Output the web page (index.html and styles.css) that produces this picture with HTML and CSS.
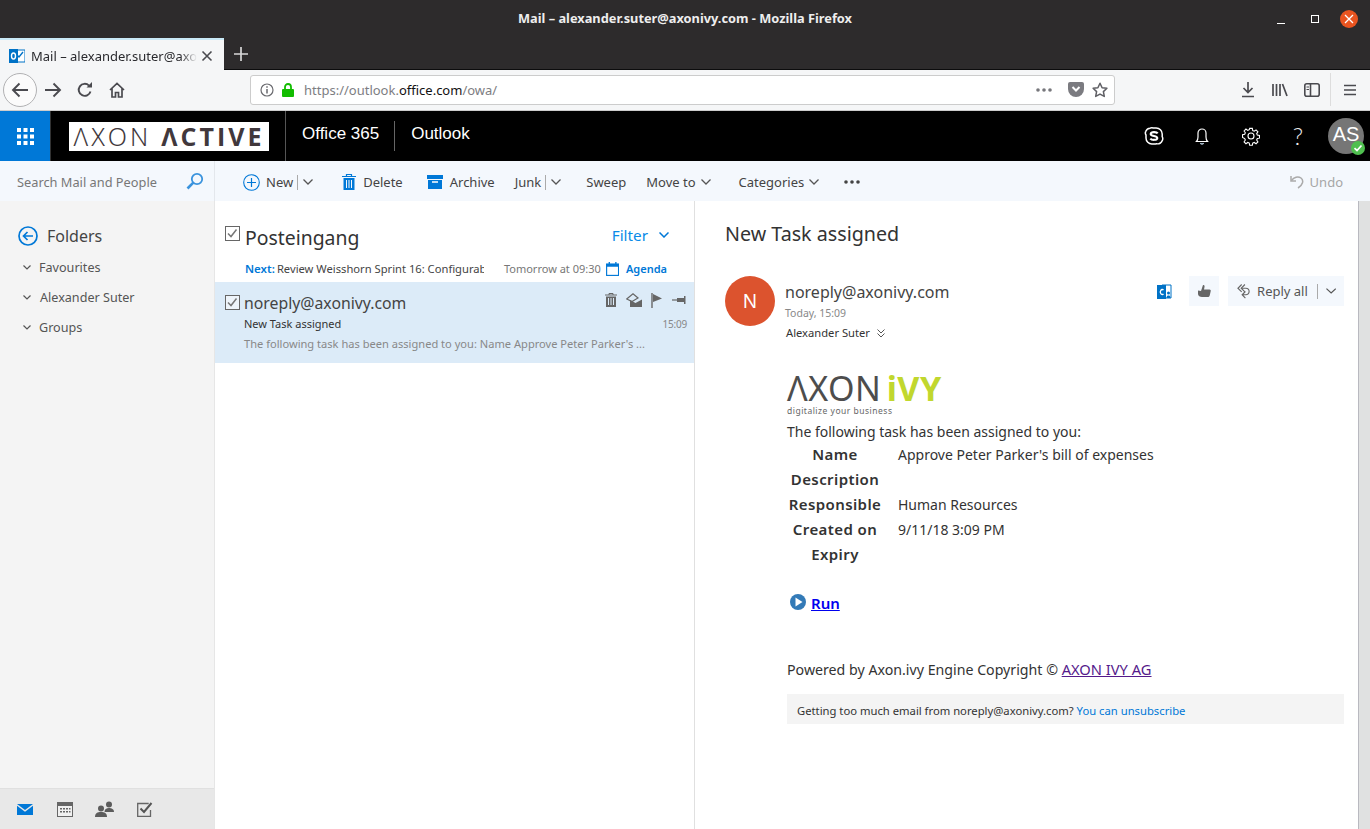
FILE: index.html
```html
<!DOCTYPE html>
<html lang="en">
<head>
    <meta charset="UTF-8">
    <title>Mail – alexander.suter@axonivy.com - Mozilla Firefox</title>
    <link rel="stylesheet" href="styles.css">
</head>
<body>
    <div class="titlebar">
        <span class="win-title">Mail – alexander.suter@axonivy.com - Mozilla Firefox</span>
        <div class="win-controls">
            <svg width="10" height="10" viewBox="0 0 10 10"><path d="M1 9.500h8" stroke="#fff" stroke-width="1"/></svg>
            <svg width="10" height="10" viewBox="0 0 10 10"><rect x="1.500" y="1.500" width="7" height="7" fill="none" stroke="#fff" stroke-width="1"/></svg>
            <span class="win-close"><svg width="10" height="10" viewBox="0 0 10 10"><path d="M1 1l8 8M9 1l-8 8" stroke="#fff" stroke-width="1.300"/></svg></span>
        </div>
    </div>

    <div class="tabbar">
        <div class="tab">
            <svg class="favicon" width="16" height="16" viewBox="0 0 16 16"><rect x="6" y="2" width="10" height="12" fill="#fff" stroke="#0072c6"/><path d="M8 7l2 2 4-5" fill="none" stroke="#0072c6" stroke-width="1.400"/><rect x="0" y="1" width="9" height="14" fill="#0072c6"/><ellipse cx="4.500" cy="8" rx="2" ry="3" fill="none" stroke="#fff" stroke-width="1.400"/></svg>
            <span class="tab-label">Mail – alexander.suter@axo</span>
            <svg width="12" height="12" viewBox="0 0 12 12"><path d="M1.500 1.500l9 9M10.500 1.500l-9 9" stroke="#4a4a4f" stroke-width="1.600"/></svg>
        </div>
        <svg class="newtab" width="14" height="14" viewBox="0 0 14 14"><path d="M7 0v14M0 7h14" stroke="#d7d7d8" stroke-width="1.700"/></svg>
    </div>

    <div class="navbar">
        <span class="back-btn"><svg width="18" height="16" viewBox="0 0 18 16"><path d="M17 8H2M8.500 1.500L2 8l6.500 6.500" fill="none" stroke="#4a4a4f" stroke-width="1.900"/></svg></span>
        <svg class="nav-ico fwd" width="18" height="16" viewBox="0 0 18 16"><path d="M1 8h15M9.500 1.500L16 8l-6.500 6.500" fill="none" stroke="#4a4a4f" stroke-width="1.900"/></svg>
        <svg class="nav-ico reload" width="16" height="16" viewBox="0 0 16 16"><path d="M13.500 9.500A6 6 0 1 1 12 3.600" fill="none" stroke="#4a4a4f" stroke-width="1.900"/><path d="M9.500 5.500h5.500V0z" fill="#4a4a4f"/></svg>
        <svg class="nav-ico home" width="16" height="16" viewBox="0 0 16 16"><path d="M1 8l7-6.500L15 8M3 6.500V15h3.500v-4.500h3V15H13V6.500" fill="none" stroke="#4a4a4f" stroke-width="1.700"/></svg>
        <div class="urlbar">
            <svg width="14" height="14" viewBox="0 0 14 14"><circle cx="7" cy="7" r="6" fill="none" stroke="#6a6a6f" stroke-width="1.200"/><path d="M7 6v4.500M7 3.200v1.600" stroke="#6a6a6f" stroke-width="1.500"/></svg>
            <svg class="lock" width="12" height="14" viewBox="0 0 12 14"><path d="M3 6V4a3 3 0 0 1 6 0v2" fill="none" stroke="#12bc00" stroke-width="1.800"/><rect x="0" y="6" width="12" height="8" rx="1" fill="#12bc00"/></svg>
            <span class="url"><span class="url-dim">https://outlook.</span>office.com<span class="url-dim">/owa/</span></span>
            <svg class="url-dots" width="16" height="4" viewBox="0 0 16 4" fill="#77777c"><circle cx="2" cy="2" r="1.800"/><circle cx="8" cy="2" r="1.800"/><circle cx="14" cy="2" r="1.800"/></svg>
            <svg width="16" height="15" viewBox="0 0 16 15"><path d="M2 0h12a2 2 0 0 1 2 2v5A8 8 0 0 1 0 7V2a2 2 0 0 1 2-2z" fill="#7b7b80"/><path d="M4.500 5L8 8.500 11.500 5" fill="none" stroke="#fff" stroke-width="2"/></svg>
            <svg width="16" height="16" viewBox="0 0 16 16"><path d="M8 1.300l2.100 4.400 4.800.6-3.500 3.300.9 4.800L8 12.100l-4.300 2.300.9-4.800L1.100 6.300l4.800-.6z" fill="none" stroke="#5f5f64" stroke-width="1.500" stroke-linejoin="round"/></svg>
        </div>
        <svg class="nav-ico tool-dl" width="16" height="16" viewBox="0 0 16 16"><path d="M8 0v10M3.500 6L8 10.500 12.500 6M2 14.500h12" fill="none" stroke="#4a4a4f" stroke-width="1.700"/></svg>
        <svg class="nav-ico tool" width="16" height="14" viewBox="0 0 16 14"><path d="M1 1v12M4.500 1v12M8 1v12M10.500 1l4.500 12" fill="none" stroke="#4a4a4f" stroke-width="1.700"/></svg>
        <svg class="nav-ico tool" width="16" height="14" viewBox="0 0 16 14"><rect x=".8" y=".8" width="14.400" height="12.400" rx="2" fill="none" stroke="#4a4a4f" stroke-width="1.600"/><path d="M6.500 1v12" stroke="#4a4a4f" stroke-width="1.600"/><path d="M2.500 4h2.500M2.500 6.500h2.500" stroke="#4a4a4f"/></svg>
        <span class="nav-sep"></span>
        <svg class="nav-ico" width="12" height="12" viewBox="0 0 12 12"><path d="M0 1.500h12M0 6h12M0 10.500h12" stroke="#4a4a4f" stroke-width="1.600"/></svg>
    </div>

    <div class="o365">
        <div class="waffle">
            <svg width="17" height="17" viewBox="0 0 17 17" fill="#fff"><rect width="4" height="4"/><rect x="6.500" width="4" height="4"/><rect x="13" width="4" height="4"/><rect y="6.500" width="4" height="4"/><rect x="6.500" y="6.500" width="4" height="4"/><rect x="13" y="6.500" width="4" height="4"/><rect y="13" width="4" height="4"/><rect x="6.500" y="13" width="4" height="4"/><rect x="13" y="13" width="4" height="4"/></svg>
        </div>
        <div class="brand-wrap">
            <div class="brand"><span class="brand-light">ΛXON</span> <span class="brand-bold">ΛCTIVE</span></div>
        </div>
        <span class="app-name">Office 365</span>
        <span class="app-sep"></span>
        <span class="app-name">Outlook</span>
        <div class="o365-tools">
            <svg width="20" height="20" viewBox="0 0 20 20"><path d="M6 2.200c1-.6 2.200-.5 3.200-.3h3c3.300 0 6 2.700 6 6v2.800c.6 1 .7 2.700.1 3.900-.8 2.300-3.200 3.700-5.600 3.100-.9.200-2.100.2-3 .2H8C4.700 18 2 15.300 2 12V9c-.7-1-.8-2.600-.2-3.700C2.400 3.800 4.200 2.400 6 2.200z" fill="none" stroke="#fff" stroke-width="1.500"/><path d="M13.700 7.300c-.9-1.300-6.500-2-7 .6-.5 2.800 6.800 1.500 6.600 4.300-.2 2.200-5.700 2-7 .4" fill="none" stroke="#fff" stroke-width="2.100"/></svg>
            <svg width="20" height="20" viewBox="0 0 20 20"><path d="M4.500 15.500c1-1 1.500-2 1.500-4.500V7a4 4 0 0 1 8 0v4c0 2.500.5 3.500 1.500 4.500z" fill="none" stroke="#fff" stroke-width="1.200"/><path d="M8.500 17a1.600 1.600 0 0 0 3 0" fill="none" stroke="#cfe6fa" stroke-width="1.200"/></svg>
            <svg class="gear" width="20" height="20" viewBox="0 0 20 20"><circle cx="10" cy="10" r="3" fill="none" stroke="#fff" stroke-width="1.100"/><path d="M8.500 1.500h3l.4 2.400 1.700.7 2-1.400 2.100 2.100-1.400 2 .7 1.700 2.400.4v3l-2.400.4-.7 1.700 1.400 2-2.100 2.100-2-1.400-1.700.7-.4 2.400h-3l-.4-2.400-1.700-.7-2 1.400-2.100-2.100 1.400-2-.7-1.700L.6 11.500v-3L3 8.100l.7-1.700-1.400-2 2.100-2.100 2 1.400 1.700-.7z" transform="translate(1 1) scale(.9)" fill="none" stroke="#fff" stroke-width="1.200"/></svg>
            <span class="help">?</span>
            <span class="avatar-me">AS
                <span class="presence"><svg width="10" height="10" viewBox="0 0 10 10"><path d="M1.500 5.200l2.500 2.300 4.500-5" fill="none" stroke="#fff" stroke-width="1.700"/></svg></span>
            </span>
        </div>
    </div>

    <div class="cmdbar">
        <div class="search">
            <span>Search Mail and People</span>
            <svg width="18" height="18" viewBox="0 0 18 18"><circle cx="11" cy="7" r="5.200" fill="none" stroke="#3a93dd" stroke-width="1.800"/><path d="M7.300 10.700L1.500 16.500" stroke="#3a93dd" stroke-width="2.600"/></svg>
        </div>
        <div class="commands">
            <span class="cmd cmd-new"><svg width="17" height="17" viewBox="0 0 17 17"><circle cx="8.500" cy="8.500" r="7.800" fill="none" stroke="#0078d7" stroke-width="1.100"/><path d="M8.500 4v9M4 8.500h9" stroke="#0078d7" stroke-width="1.200"/></svg>New<i class="bar"></i><svg class="chev" width="10" height="6" viewBox="0 0 10 6"><path d="M.5.500L5 5 9.500.500" fill="none" stroke="#555" stroke-width="1.300"/></svg></span>
            <span class="cmd cmd-delete"><svg width="14" height="16" viewBox="0 0 14 16"><path d="M0 2.500h14M4.500 2.500V.5h5v2" fill="none" stroke="#0078d7" stroke-width="1.200"/><path d="M1.500 4h11v12h-11z" fill="#0078d7"/><path d="M4.500 6v8M7 6v8M9.500 6v8" stroke="#f4f8fd" stroke-width="1"/></svg>Delete</span>
            <span class="cmd cmd-archive"><svg width="16" height="14" viewBox="0 0 16 14"><rect width="16" height="4" fill="#0078d7"/><path d="M1 5h14v9H1z" fill="#0078d7"/><path d="M5 7h6" stroke="#fff" stroke-width="1.500"/></svg>Archive</span>
            <span class="cmd cmd-junk">Junk<i class="bar"></i><svg class="chev" width="10" height="6" viewBox="0 0 10 6"><path d="M.5.500L5 5 9.500.500" fill="none" stroke="#555" stroke-width="1.300"/></svg></span>
            <span class="cmd cmd-sweep">Sweep</span>
            <span class="cmd cmd-move">Move to<svg class="chev" width="10" height="6" viewBox="0 0 10 6"><path d="M.5.500L5 5 9.500.500" fill="none" stroke="#555" stroke-width="1.300"/></svg></span>
            <span class="cmd cmd-cat">Categories<svg class="chev" width="10" height="6" viewBox="0 0 10 6"><path d="M.5.500L5 5 9.500.500" fill="none" stroke="#555" stroke-width="1.300"/></svg></span>
            <svg class="cmd-more" width="16" height="4" viewBox="0 0 16 4" fill="#444"><circle cx="2" cy="2" r="1.800"/><circle cx="8" cy="2" r="1.800"/><circle cx="14" cy="2" r="1.800"/></svg>
            <span class="cmd cmd-undo"><svg width="14" height="14" viewBox="0 0 14 14"><path d="M1 1v5h5" fill="none" stroke="#aaa" stroke-width="1.500"/><path d="M1.500 5.500C4 2 8 1 11 3c3 2.500 2 7-3 10" fill="none" stroke="#aaa" stroke-width="1.500"/></svg>Undo</span>
        </div>
    </div>

    <div class="main">
        <nav class="leftnav">
            <div class="folders-head">
                <svg width="20" height="20" viewBox="0 0 20 20"><circle cx="10" cy="10" r="9" fill="none" stroke="#0078d7" stroke-width="1.700"/><path d="M15 10H6M9.500 6L5.500 10l4 4" fill="none" stroke="#0078d7" stroke-width="1.700"/></svg>
                <span>Folders</span>
            </div>
            <ul class="folder-list">
                <li><svg width="8" height="5" viewBox="0 0 8 5"><path d="M.5.500L4 4 7.500.500" fill="none" stroke="#555" stroke-width="1.200"/></svg>Favourites</li>
                <li class="me"><svg width="8" height="5" viewBox="0 0 8 5"><path d="M.5.500L4 4 7.500.500" fill="none" stroke="#555" stroke-width="1.200"/></svg>Alexander Suter</li>
                <li><svg width="8" height="5" viewBox="0 0 8 5"><path d="M.5.500L4 4 7.500.500" fill="none" stroke="#555" stroke-width="1.200"/></svg>Groups</li>
            </ul>
            <div class="modules">
                <svg width="16" height="11" viewBox="0 0 16 11"><path d="M0 0h16L8 6z" fill="#0078d7"/><path d="M0 1.800V11h16V1.800L8 7.800z" fill="#0078d7"/></svg>
                <svg width="16" height="15" viewBox="0 0 16 15"><rect width="16" height="15" fill="#666"/><rect x="1" y="4" width="14" height="10" fill="#f0f0f0"/><path d="M3 6h2v1.500H3zM6 6h2v1.500H6zM9 6h2v1.500H9zM12 6h1.500v1.500H12zM3 9h2v1.500H3zM6 9h2v1.500H6zM9 9h2v1.500H9zM12 9h1.500v1.500H12z" fill="#666"/></svg>
                <svg width="20" height="16" viewBox="0 0 20 16" fill="#5c5c5c"><circle cx="14" cy="3.500" r="3"/><path d="M9.500 11c0-3 2-4 4.500-4s5 1 5 4z"/><circle cx="6" cy="7.500" r="3"/><path d="M0 16c0-4 2.500-5 6-5s6 1 6 5z"/></svg>
                <svg width="16" height="15" viewBox="0 0 16 15"><path d="M13.500 8v6.300H.7V1.500h11" fill="none" stroke="#666" stroke-width="1.300"/><path d="M3.500 6.500l3.500 3.500 7.500-9" fill="none" stroke="#555" stroke-width="2"/></svg>
            </div>
        </nav>

        <section class="msglist">
            <div class="list-head">
                <svg class="check" width="15" height="15" viewBox="0 0 15 15"><rect x=".5" y=".5" width="14" height="14" fill="none" stroke="#666"/><path d="M3 7.500l3 3 5.500-7" fill="none" stroke="#777" stroke-width="1.500"/></svg>
                <h2>Posteingang</h2>
                <span class="filter">Filter<svg width="10" height="6" viewBox="0 0 10 6"><path d="M.5.500L5 5 9.500.500" fill="none" stroke="#0078d7" stroke-width="1.500"/></svg></span>
            </div>
            <div class="next-row">
                <b class="next-label">Next:</b>
                <span class="next-title">Review Weisshorn Sprint 16: Configurab</span>
                <span class="next-time">Tomorrow at 09:30</span>
                <svg width="15" height="16" viewBox="0 0 15 16"><rect x=".7" y="2.500" width="13.600" height="12.800" fill="none" stroke="#0078d7" stroke-width="1.300"/><path d="M0 2h15v3.500H0zM3 0h1.500v3H3zM10.500 0H12v3h-1.500z" fill="#0078d7"/></svg>
                <b class="agenda">Agenda</b>
            </div>
            <div class="msg-row">
                <div class="msg-top">
                    <svg class="check" width="15" height="15" viewBox="0 0 15 15"><rect x=".5" y=".5" width="14" height="14" fill="#eef4fa" stroke="#666"/><path d="M3 7.500l3 3 5.500-7" fill="none" stroke="#777" stroke-width="1.500"/></svg>
                    <span class="msg-from">noreply@axonivy.com</span>
                    <div class="msg-actions">
                        <svg width="12" height="14" viewBox="0 0 12 14"><path d="M0 2h12M4 2V.5h4V2" fill="none" stroke="#666"/><path d="M1 3.500h10V14H1z" fill="#666"/><path d="M3.500 5v7M6 5v7M8.500 5v7" stroke="#dcebf8"/></svg>
                        <svg width="16" height="14" viewBox="0 0 16 14"><path d="M.7 6L7 .8 12 5 6 8.500z" fill="none" stroke="#666" stroke-width="1.200"/><path d="M4 7l5.500 3L16 6.500V14H4z" fill="#666"/></svg>
                        <svg width="12" height="15" viewBox="0 0 12 15"><path d="M1 0v15" stroke="#666" stroke-width="1.400"/><path d="M2 1l9 4.500L2 9z" fill="#666"/></svg>
                        <svg width="15" height="10" viewBox="0 0 15 10"><path d="M0 5h6" stroke="#666" stroke-width="1.200"/><path d="M5 3h7V1h1.500v8H12V7H5z" fill="#666"/></svg>
                    </div>
                </div>
                <div class="msg-subject-row"><span>New Task assigned</span><span class="msg-time">15:09</span></div>
                <div class="msg-preview">The following task has been assigned to you: Name Approve Peter Parker's ...</div>
            </div>
        </section>

        <section class="reading">
            <h1 class="subject">New Task assigned</h1>
            <div class="sender">
                <span class="avatar">N</span>
                <div class="sender-info">
                    <div class="sender-name">noreply@axonivy.com</div>
                    <div class="sender-date">Today, 15:09</div>
                    <div class="sender-to">Alexander Suter<svg width="8" height="9" viewBox="0 0 8 9"><path d="M.5.500L4 4 7.500.500M.5 4.500L4 8l3.500-3.500" fill="none" stroke="#555"/></svg></div>
                </div>
                <div class="sender-actions">
                    <svg class="sfb" width="15" height="15" viewBox="0 0 15 15"><path d="M5 1h9v13H5z" fill="none" stroke="#0072c6"/><rect y="1" width="9" height="14" fill="#0072c6"/><path d="M6.500 6a2 2.500 0 1 0 0 4" fill="none" stroke="#fff" stroke-width="1.300"/><circle cx="11.500" cy="9" r="1.500" fill="#0072c6"/><path d="M9.500 14c0-2 1-2.500 2-2.500s2 .5 2 2.500z" fill="#0072c6"/></svg>
                    <span class="act-btn"><svg width="14" height="14" viewBox="0 0 14 14"><path d="M1 6.500l3 .5L6 1c1.200-.3 1.800.6 1.500 2L7 5.500h5.500c1 0 1.500.8 1.200 1.800l-1 4.200c-.3 1-1 1.500-2 1.500H5c-2 0-4-1-4-3z" fill="#666"/></svg></span>
                    <span class="act-btn reply"><svg width="14" height="17" viewBox="0 0 14 17"><path d="M5 1L1 5l4 4M8.500 1l-4 4 4 4" fill="none" stroke="#666" stroke-width="1.200"/><path d="M5 5h4.500a3.500 3.500 0 0 1 0 7H6M9 8.500L5.500 12 9 15.500" fill="none" stroke="#666" stroke-width="1.200"/></svg><span class="reply-label">Reply all</span><i class="bar"></i><svg width="11" height="6" viewBox="0 0 11 6"><path d="M.5.500L5.500 5l5-4.500" fill="none" stroke="#555" stroke-width="1.300"/></svg></span>
                </div>
            </div>
            <div class="mail-body">
                <div class="ivy-logo"><span class="ivy-axon">ΛXON</span> <span class="ivy-ivy">iVY</span></div>
                <div class="ivy-tag">digitalize your business</div>
                <p class="intro">The following task has been assigned to you:</p>
                <table class="task-table">
                    <tr><th>Name</th><td>Approve Peter Parker's bill of expenses</td></tr>
                    <tr><th>Description</th><td></td></tr>
                    <tr><th>Responsible</th><td>Human Resources</td></tr>
                    <tr><th>Created on</th><td>9/11/18 3:09 PM</td></tr>
                    <tr><th>Expiry</th><td></td></tr>
                </table>
                <div class="run">
                    <svg width="16" height="16" viewBox="0 0 16 16"><circle cx="8" cy="8" r="8" fill="#337ab7"/><path d="M5.500 3.500l7 4.500-7 4.500z" fill="#fff"/></svg>
                    <a href="#">Run</a>
                </div>
                <p class="powered">Powered by Axon.ivy Engine Copyright © <a href="#">AXON IVY AG</a></p>
                <div class="unsub">Getting too much email from noreply@axonivy.com? <span>You can unsubscribe</span></div>
            </div>
        </section>
        <div class="scrollbar"></div>
    </div>
</body>
</html>
```

FILE: styles.css
```css
* {
    box-sizing: border-box;
}
html, body {
    margin: 0;
    height: 829px;
    overflow: hidden;
}
body {
    display: flex;
    flex-direction: column;
    font-family: "Noto Sans", sans-serif;
    font-size: 14px;
    color: #333;
    background: #2d2b2c;
}

/* browser chrome */
.titlebar {
    height: 38px;
    flex: none;
    display: flex;
    align-items: center;
    justify-content: center;
    position: relative;
    padding-bottom: 2px;
    background: #2d2b2c;
    color: #eee;
}
.win-title {
    font-size: 12.800px;
    font-weight: 700;
}
.win-controls {
    position: absolute;
    top: 10px;
    right: 12px;
    display: flex;
    align-items: center;
    gap: 24px;
}
.win-close {
    width: 18px;
    height: 18px;
    margin-left: -4px;
    border-radius: 50%;
    background: #e95420;
    display: flex;
    align-items: center;
    justify-content: center;
}
.tabbar {
    height: 32px;
    flex: none;
    display: flex;
    align-items: center;
    background: #2d2b2c;
    border-bottom: 1px solid #0c0c0d;
}
.tab {
    width: 224px;
    height: 32px;
    display: flex;
    align-items: center;
    padding: 2px 11px 0 9px;
    background: #f5f6f7;
    border-top: 2px solid #c9e9f7;
    font-size: 13px;
    color: #2a2a2e;
}
.favicon {
    margin-right: 6px;
}
.tab-label {
    flex: 1;
    overflow: hidden;
    white-space: nowrap;
    margin-right: 4px;
    -webkit-mask-image: linear-gradient(to right, #000 90%, transparent);
    mask-image: linear-gradient(to right, #000 90%, transparent);
}
.newtab {
    margin-left: 10px;
}
.navbar {
    height: 41px;
    flex: none;
    display: flex;
    align-items: center;
    padding: 0 14px 1px 3px;
    background: #f5f6f7;
    border-bottom: 1px solid #ccc;
}
.back-btn {
    width: 34px;
    height: 34px;
    flex: none;
    border: 1px solid #b1b1b3;
    border-radius: 50%;
    background: #fbfbfb;
    display: flex;
    align-items: center;
    justify-content: center;
}
.nav-ico {
    flex: none;
}
.fwd {
    margin-left: 7px;
}
.reload {
    margin-left: 15px;
}
.home {
    margin-left: 16px;
}
.urlbar {
    width: 865px;
    height: 30px;
    flex: none;
    margin-left: 125px;
    display: flex;
    align-items: center;
    gap: 8px;
    padding: 0 6px 0 9px;
    background: #fff;
    border: 1px solid #ccc;
    border-radius: 3px;
}
.lock {
    margin: 0 2px 0 0;
}
.url {
    flex: 1;
    font-size: 13px;
    color: #111;
}
.url-dim {
    color: #7d7d82;
}
.url-dots {
    margin-right: 8px;
}
.tool-dl {
    margin-left: 125px;
}
.tool {
    margin-left: 16px;
}
.nav-sep {
    width: 1px;
    height: 33px;
    margin: 0 13px 0 10px;
    background: #ddd;
}

/* office 365 bar */
.o365 {
    height: 50px;
    flex: none;
    display: flex;
    align-items: center;
    background: #000;
    color: #fff;
}
.waffle {
    width: 51px;
    height: 50px;
    display: flex;
    align-items: center;
    justify-content: center;
    background: #0078d7;
    border-right: 1px solid #333;
}
.brand-wrap {
    width: 235px;
    height: 50px;
    padding: 11px 0 0 18px;
    border-right: 1px solid #555;
    margin-right: 16px;
}
.brand {
    width: 200px;
    height: 29px;
    background: #fff;
    color: #41383c;
    font-size: 25px;
    line-height: 29px;
    text-align: center;
    white-space: nowrap;
    letter-spacing: 3.200px;
}
.brand-light {
    font-weight: 300;
}
.brand-bold {
    font-weight: 700;
    font-family: "Open Sans", sans-serif;
    letter-spacing: 3px;
}
.app-name {
    font-family: "Liberation Sans", sans-serif;
    font-size: 17px;
    margin-top: -5px;
}
.app-sep {
    width: 1px;
    height: 30px;
    margin: 0 16px 0 15px;
    background: #666;
}
.o365-tools {
    margin-left: auto;
    display: flex;
    align-items: center;
    gap: 28px;
    padding-right: 6px;
}
.gear {
    position: relative;
    left: 1px;
}
.help {
    width: 20px;
    text-align: center;
    font-family: "Lato", sans-serif;
    font-size: 24px;
    font-weight: 300;
    line-height: 30px;
    color: #eee;
}
.avatar-me {
    position: relative;
    width: 36px;
    height: 36px;
    margin-left: -8px;
    border-radius: 50%;
    background: #767676;
    color: #fff;
    font-family: "Liberation Sans", sans-serif;
    font-size: 20px;
    line-height: 33px;
    text-align: center;
}
.presence {
    position: absolute;
    right: -1px;
    bottom: -1px;
    width: 14px;
    height: 14px;
    border-radius: 50%;
    background: #4fbf4f;
    display: flex;
    align-items: center;
    justify-content: center;
}

/* commands */
.cmdbar {
    height: 40px;
    flex: none;
    display: flex;
    background: #f4f8fd;
    font-size: 13px;
    color: #444;
}
.search {
    width: 215px;
    display: flex;
    align-items: center;
    justify-content: space-between;
    padding: 2px 10px 0 17px;
    border-right: 1px solid #e3e7ec;
    font-size: 12.800px;
    color: #777;
}
.search svg {
    margin-top: -3px;
}
.commands {
    flex: 1;
    display: flex;
    align-items: center;
    padding: 2px 0 0 28px;
}
.cmd {
    display: flex;
    align-items: center;
    white-space: nowrap;
}
.cmd > svg:first-child {
    margin-right: 6px;
}
.cmd-delete > svg:first-child,
.cmd-archive > svg:first-child {
    margin-right: 7px;
}
.bar {
    width: 1px;
    height: 15px;
    background: #aaa;
    margin: 0 5px 0 4px;
}
.chev {
    flex: none;
}
.cmd-move .chev,
.cmd-cat .chev {
    margin-left: 5px;
}
.cmd-delete {
    margin-left: 29px;
}
.cmd-archive {
    margin-left: 24px;
}
.cmd-junk {
    margin-left: 20px;
}
.cmd-sweep {
    margin-left: 25px;
}
.cmd-move {
    margin-left: 20px;
}
.cmd-cat {
    margin-left: 22px;
}
.cmd-more {
    margin-left: 19px;
}
.cmd-undo {
    margin-left: auto;
    margin-right: 27px;
    color: #a6a6a6;
}

/* three panes */
.main {
    flex: 1;
    display: flex;
    min-height: 0;
    background: #fff;
}
.leftnav {
    width: 215px;
    flex: none;
    display: flex;
    flex-direction: column;
    background: #f4f4f4;
    border-right: 1px solid #e6e6e6;
}
.folders-head {
    display: flex;
    align-items: center;
    gap: 9px;
    padding: 24px 0 0 18px;
    font-size: 16px;
    color: #444;
}
.folder-list {
    list-style: none;
    margin: 5px 0 0;
    padding: 0;
    flex: 1;
    font-size: 12.600px;
    color: #555;
}
.folder-list li {
    height: 30px;
    display: flex;
    align-items: center;
    padding-left: 23px;
    gap: 8px;
}
.folder-list li.me {
    gap: 9px;
}
.modules {
    height: 41px;
    flex: none;
    display: flex;
    align-items: center;
    gap: 22px;
    padding-left: 17px;
    background: #e8e8e8;
    border-top: 1px solid #e0e0e0;
}
.modules svg:first-child {
    margin-right: 2px;
}
.msglist {
    width: 480px;
    flex: none;
    border-right: 1px solid #e0e0e0;
}
.list-head {
    display: flex;
    align-items: center;
    height: 56px;
    padding: 16px 25px 0 10px;
}
.list-head h2 {
    margin: 0 0 0 5px;
    flex: 1;
    font-size: 19.400px;
    font-weight: 400;
    color: #333;
}
.list-head .check {
    margin-top: -8px;
}
.filter {
    display: flex;
    align-items: center;
    gap: 11px;
    font-size: 15.300px;
    color: #0a8be8;
    margin-top: -4px;
}
.next-row {
    height: 25px;
    display: flex;
    align-items: center;
    padding: 0 27px 2px 30px;
    font-size: 11px;
    white-space: nowrap;
}
.next-label {
    color: #0078d7;
    font-weight: 600;
    font-size: 11.500px;
    margin-right: 2px;
}
.next-title {
    width: 207px;
    flex: none;
    overflow: hidden;
    font-size: 11.200px;
    color: #444;
}
.next-time {
    margin: 0 5px 0 20px;
    color: #777;
}
.agenda {
    margin-left: 7px;
    color: #0078d7;
    font-weight: 600;
}
.msg-row {
    height: 81px;
    padding: 8px 7px 0 10px;
    background: #dcebf8;
}
.msg-top {
    display: flex;
    align-items: center;
    height: 25px;
}
.msg-from {
    margin-left: 4px;
    flex: 1;
    font-size: 15.800px;
    color: #444;
}
.msg-actions {
    display: flex;
    align-items: center;
    gap: 9px;
    margin-top: -5px;
}
.msg-subject-row {
    display: flex;
    justify-content: space-between;
    padding-left: 19px;
    font-size: 11px;
    line-height: 18px;
    color: #333;
}
.msg-time {
    font-size: 10px;
    letter-spacing: -.2px;
    color: #888;
}
.msg-preview {
    padding: 3px 0 0 19px;
    font-size: 11.100px;
    color: #888;
    white-space: nowrap;
}
.reading {
    flex: 1;
    min-width: 0;
    padding: 0 14px 0 30px;
}
.scrollbar {
    width: 12px;
    flex: none;
    background: #e0e1e1;
    border-left: 1px solid #b9b9c0;
}
.subject {
    margin: 19px 0 0;
    font-size: 19.700px;
    line-height: 28px;
    font-weight: 400;
    color: #333;
}
.sender {
    display: flex;
    margin-top: 28px;
}
.avatar {
    width: 50px;
    height: 50px;
    flex: none;
    border-radius: 50%;
    background: #dc532e;
    color: #fff;
    font-size: 19px;
    line-height: 50px;
    text-align: center;
}
.sender-info {
    flex: 1;
    margin-left: 10px;
}
.sender-name {
    padding-top: 5px;
    font-size: 16px;
    line-height: 22px;
    color: #444;
}
.sender-date {
    margin-top: 2px;
    font-size: 10.500px;
    line-height: 16px;
    color: #888;
}
.sender-to {
    display: flex;
    align-items: center;
    gap: 7px;
    margin: 3px 0 0 1px;
    font-size: 11.200px;
    line-height: 18px;
    color: #333;
}
.sender-actions {
    display: flex;
    align-items: flex-start;
    gap: 9px;
}
.sfb {
    margin: 8px 8px 0 0;
}
.act-btn {
    height: 30px;
    min-width: 30px;
    display: flex;
    align-items: center;
    justify-content: center;
    background: #f4f8fd;
}
.reply {
    gap: 7px;
    width: 116px;
    padding: 0 8px 0 9px;
    font-size: 13px;
    color: #555;
}
.reply-label {
    white-space: nowrap;
    margin-right: 2px;
}
.reply .bar {
    margin: 0 1px 0 0;
}
.mail-body {
    margin: 29px 0 0 62px;
}
.ivy-logo {
    font-size: 34px;
    line-height: 34px;
    letter-spacing: .5px;
    white-space: nowrap;
}
.ivy-axon {
    color: #4d4d4d;
}
.ivy-ivy {
    margin-left: -4px;
    color: #c1d72e;
    font-weight: 700;
}
.ivy-tag {
    font-size: 8.500px;
    line-height: 11px;
    letter-spacing: .5px;
    color: #666;
}
.intro {
    margin: 6px 0 0;
    font-size: 14px;
    line-height: 20px;
}
.task-table {
    border-collapse: collapse;
    font-size: 14px;
}
.task-table th {
    width: 96px;
    height: 25px;
    padding: 0 0 2px;
    font-size: 15px;
    font-weight: 600;
    letter-spacing: .4px;
    text-align: center;
}
.task-table td {
    padding: 0 0 0 15px;
}
.run {
    display: flex;
    align-items: center;
    gap: 5px;
    margin: 26px 0 0 3px;
    font-size: 15px;
    font-weight: 600;
}
.run svg {
    margin-top: -3px;
}
.run a {
    color: #00e;
}
.powered {
    margin: 46px 0 0;
    font-size: 14.200px;
    line-height: 20px;
}
.powered a {
    font-size: 14.700px;
    color: #551a8b;
}
.unsub {
    height: 30px;
    margin-top: 14px;
    padding-left: 10px;
    background: #f4f4f4;
    font-size: 11.250px;
    line-height: 33px;
    color: #333;
}
.unsub span {
    color: #0078d7;
}
```
